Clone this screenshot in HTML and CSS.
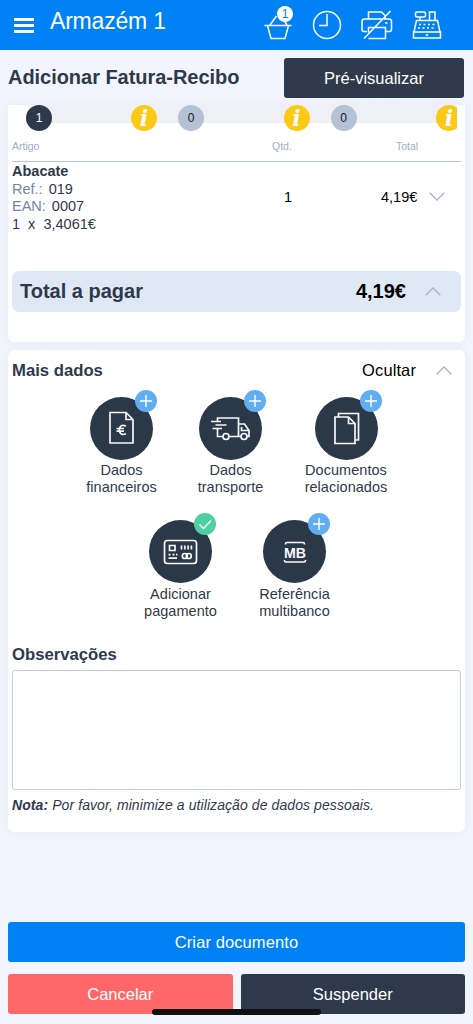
FILE: index.html
```html
<!DOCTYPE html>
<html lang="pt">
<head>
<meta charset="utf-8">
<meta name="viewport" content="width=device-width, initial-scale=1">
<title>Adicionar Fatura-Recibo</title>
<link rel="stylesheet" href="styles.css">
</head>
<body>
<div class="app">
  <header class="topbar">
    <button class="menu" aria-label="Menu"><span></span><span></span><span></span></button>
    <div class="store">Armazém 1</div>
    <nav class="tools">
      <span class="tool basket">
        <svg width="30" height="30" viewBox="0 0 30 30"><path d="M1.500 15.500h27M4.500 15.500L8 28.500h14l3.500-13M7 15L13.500 6M21 10l3 5"/></svg>
        <span class="count">1</span>
      </span>
      <span class="tool clock"><svg width="30" height="30" viewBox="0 0 30 30"><circle cx="15" cy="15" r="13.500"/><path d="M15 4v11.500H7"/></svg></span>
      <span class="tool printer"><svg width="32" height="30" viewBox="0 0 32 30"><path d="M7.500 9V2h13l3.500 3.500V9M6 21.500H3q-2 0-2-2V11.500Q1 9 3.500 9h24.500q2.500 0 2.500 2.500V19.500q0 2-2 2h-4M7.500 22.500V17.500h17V28.500h-17M24 13h2.500M3 28.500L29.500 1"/></svg></span>
      <span class="tool register"><svg width="30" height="30" viewBox="0 0 30 30"><rect x="3.500" y="2" width="10" height="5" rx="1.500"/><path d="M8 7v3.500M17.500 10.500V2h5.500v8.500M4.500 10.500h21l2.500 11.500h-26zM1.500 22h27v6h-27zM13.700 25h2.500M7 14.500h2M11.500 14.500h2M16 14.500h2M20.500 14.500h2M6 18h2M10.500 18h2M15 18h2M19.500 18h2"/></svg></span>
    </nav>
  </header>

  <div class="titlebar">
    <h1>Adicionar Fatura-Recibo</h1>
    <button class="btn preview">Pré-visualizar</button>
  </div>

  <main>
    <section class="card items">
      <div class="steps">
        <span class="dot active">1</span>
        <span class="dot info">i</span>
        <span class="dot">0</span>
        <span class="dot info">i</span>
        <span class="dot">0</span>
        <span class="dot info">i</span>
      </div>
      <div class="thead"><span>Artigo</span><span class="qty">Qtd.</span><span class="sum">Total</span></div>
      <div class="line">
        <div class="desc">
          <strong class="name">Abacate</strong>
          <div class="ref"><span>Ref.:</span> 019</div>
          <div class="ean"><span>EAN:</span> 0007</div>
          <div class="price">1 &nbsp;x &nbsp;3,4061€</div>
        </div>
        <div class="qty">1</div>
        <div class="sum">4,19€</div>
        <svg class="chev" width="16" height="9" viewBox="0 0 16 9"><path d="M.7.700L8 8l7.300-7.300"/></svg>
      </div>
      <div class="total">
        <span class="label">Total a pagar</span><span class="amount">4,19€</span>
        <svg class="chev" width="16" height="9" viewBox="0 0 16 9"><path d="M.7 8.300L8 1l7.300 7.300"/></svg>
      </div>
    </section>

    <section class="card more">
      <div class="morehead">
        <h2>Mais dados</h2><span class="hide">Ocultar</span>
        <svg class="chev" width="16" height="9" viewBox="0 0 16 9"><path d="M.7 8.300L8 1l7.300 7.300"/></svg>
      </div>
      <div class="row first">
        <a class="action fin"><span class="disc">
          <svg width="63" height="63" viewBox="0 0 63 63"><path d="M20 15.500h16l7 7v23.500H20zM36 15.500v7h7"/><path d="M36 29q-6-2.500-6.800 3.800q.8 6.400 6.800 4M26.500 31.500h7.500M26.500 34.200h7.500"/></svg>
          <i class="badge"><svg width="22" height="22" viewBox="0 0 22 22"><path d="M11 5v12M5 11h12"/></svg></i></span>
          <span class="cap">Dados<br>financeiros</span></a>
        <a class="action tra"><span class="disc">
          <svg width="63" height="63" viewBox="0 0 63 63"><path d="M18.500 24v-3H39.500V39.500H30.500M18.500 32v7.500h5M39.500 27h6l4.500 6.500v6h-2M39.500 39.500h2.500M42.500 30V33.500H49.500M12 24.500h10M16.500 28h11M13.500 31.500H23"/><circle cx="27" cy="39.500" r="3"/><circle cx="45" cy="39.500" r="3"/></svg>
          <i class="badge"><svg width="22" height="22" viewBox="0 0 22 22"><path d="M11 5v12M5 11h12"/></svg></i></span>
          <span class="cap">Dados<br>transporte</span></a>
        <a class="action doc"><span class="disc">
          <svg width="63" height="63" viewBox="0 0 63 63"><path d="M20 20h13.500l6.500 6.500v20H20zM33.500 20v6.500h6.500M23.500 20v-3.500H43.500v26.500H40"/></svg>
          <i class="badge"><svg width="22" height="22" viewBox="0 0 22 22"><path d="M11 5v12M5 11h12"/></svg></i></span>
          <span class="cap">Documentos<br>relacionados</span></a>
      </div>
      <div class="row second">
        <a class="action pay"><span class="disc">
          <svg width="63" height="63" viewBox="0 0 63 63"><rect x="15.500" y="20.500" width="32" height="23" rx="3"/><path d="M20.500 25.500h5.500v5h-5.500zM32.500 25.500v4M35.800 25.500v4M39.100 25.500v4M42.400 25.500v4M19.500 34.700h2M23.500 34.700h2M27 34.700h1.500M19.500 38.200h8.500"/><circle cx="35.800" cy="36" r="2.500"/><circle cx="39.800" cy="36" r="2.500"/></svg>
          <i class="badge done"><svg width="22" height="22" viewBox="0 0 22 22"><path d="M5.500 11.500l4 4L17 7.500"/></svg></i></span>
          <span class="cap">Adicionar<br>pagamento</span></a>
        <a class="action mb"><span class="disc">
          <svg width="63" height="63" viewBox="0 0 63 63"><path d="M22.500 24.500v-.5q0-1.500 1.500-1.500h16q1.500 0 1.500 1.500v.5M21.500 40v.5q0 1.500 1.500 1.500h18q1.500 0 1.500-1.500v-.5"/><text x="21" y="37.700" class="mbtext" textLength="22" lengthAdjust="spacingAndGlyphs">MB</text></svg>
          <i class="badge"><svg width="22" height="22" viewBox="0 0 22 22"><path d="M11 5v12M5 11h12"/></svg></i></span>
          <span class="cap">Referência<br>multibanco</span></a>
      </div>
      <h2 class="obs">Observações</h2>
      <textarea aria-label="Observações"></textarea>
      <p class="note"><b>Nota:</b> Por favor, minimize a utilização de dados pessoais.</p>
    </section>
  </main>

  <footer>
    <button class="btn create">Criar documento</button>
    <div class="pair">
      <button class="btn cancel">Cancelar</button>
      <button class="btn suspend">Suspender</button>
    </div>
  </footer>
  <div class="home"></div>
</div>
</body>
</html>
```
FILE: styles.css
```css
* { box-sizing: border-box; }
body {
  margin: 0;
  background: #f2f5fd;
  color: #2f394c;
  font-family: "Liberation Sans", Arial, sans-serif;
}
.app { position: relative; width: 473px; height: 1024px; overflow: hidden; display: flex; flex-direction: column; }
button { border: 0; padding: 0; font: inherit; }
h1, h2, p { margin: 0; }
svg { display: block; fill: none; }

.topbar { flex: none; height: 50px; padding-left: 14px; background: #0082f4; color: #fff; display: flex; }
.menu { width: 20px; height: 15px; margin-top: 18px; background: none; display: flex; flex-direction: column; justify-content: space-between; }
.menu span { width: 20px; height: 3px; background: #fff; }
.store { margin-left: 16px; width: 214px; font-size: 23px; line-height: 42px; letter-spacing: -.2px; }
.tools { display: flex; }
.tools svg { stroke: #fff; stroke-width: 1.5; }
.tool { position: relative; margin-top: 10px; }
.basket { width: 49px; margin-left: -1px; }
.clock { width: 49px; }
.printer { width: 51px; }
.count { position: absolute; left: 14px; top: -4px; width: 16px; height: 16px; border-radius: 50%; background: #fff; color: #0082f4; font-size: 12px; line-height: 16px; text-align: center; }

.titlebar { flex: none; height: 55px; padding: 8px 9px 0 8px; display: flex; justify-content: space-between; align-items: flex-start; }
h1 { font-size: 20px; line-height: 38px; letter-spacing: -.04px; }
.btn { height: 40px; border-radius: 3px; color: #fff; font-size: 16.500px; text-align: center; }
.preview { width: 180px; background: #2f394c; }

main { flex: none; padding: 0 8px; display: flex; flex-direction: column; gap: 8px; }
.card { background: #fff; width: 457px; padding: 0 4px; box-shadow: 0 0 10px rgba(50, 50, 70, .055); }
.items { height: 237px; border-radius: 0 0 6px 6px; }
.steps { height: 27px; margin: 0 4px 0 14px; overflow: hidden; display: flex; background: linear-gradient(#eef0f6, #eef0f6) 13px 0 / 100% 18px no-repeat; }
.dot { flex: none; width: 26px; height: 26px; border-radius: 50%; background: #b5c2d6; color: #14181f; font-size: 12px; line-height: 27px; text-align: center; margin-right: 79.500px; }
.dot.active { background: #2f394c; color: #fff; margin-right: 79px; }
.dot.info { background: #fcc916; color: #fff; margin-right: 21px; font: italic bold 22px/26px "DejaVu Serif", serif; }
.thead { height: 30px; border-bottom: 1px solid #b5c5db; display: grid; grid-template-columns: 260px 124px 1fr; color: #a0adc6; font-size: 10.500px; line-height: 28px; }
.line { height: 108px; padding-top: 1px; display: grid; grid-template-columns: 272px 97px 48px 1fr; font-size: 15px; color: #000; }
.desc { color: #2f394c; font-size: 14.500px; line-height: 17.700px; }
.name { display: block; }
.desc span { color: #7584a7; margin-right: 2px; }
.line .qty, .line .sum { line-height: 68px; font-size: 14.500px; }
.chev { stroke: #a4b4d0; stroke-width: 1.3; }
.line .chev { margin-top: 29px; }
.total { height: 41px; width: 449px; margin-top: 1px; padding: 0 20px 0 8px; border-radius: 7px; background: #dfe9f5; display: flex; align-items: center; font-size: 20px; font-weight: bold; }
.total .label { flex: 1; }
.total .amount { color: #000; margin-right: 19px; }

.more { height: 482px; border-radius: 6px; }
.morehead { height: 39px; display: flex; align-items: center; padding: 2px 9px 0 0; }
h2 { font-size: 16.700px; line-height: 20px; flex: 1; }
.hide { color: #000; font-size: 16.500px; letter-spacing: .1px; margin-right: 20px; }
.row { display: flex; justify-content: flex-start; }
.first { height: 124px; padding: 8px 0 0 64px; }
.second { height: 122px; padding: 7px 0 0 122px; }
.action { flex: none; display: flex; flex-direction: column; align-items: center; }
.fin { width: 91px; }
.tra { width: 127px; }
.doc { width: 104px; }
.pay { width: 93px; }
.mb { width: 135px; }
.disc { position: relative; width: 63px; height: 63px; border-radius: 50%; background: #2b3848; }
.disc > svg { stroke: #f7f8fa; stroke-width: 1.7; }
.disc text { fill: #f7f8fa; stroke: none; }
.mbtext { font-size: 15px; font-weight: bold; }
.badge { position: absolute; left: 45px; top: -7px; width: 22px; height: 22px; border-radius: 50%; background: #61adf2; }
.badge.done { background: #4ed0a4; }
.badge svg { stroke: #fff; stroke-width: 1.4; }
.cap { margin-top: 2px; font-size: 14.500px; line-height: 16.500px; letter-spacing: .04px; text-align: center; white-space: nowrap; }
.second .cap { margin-top: 3px; }
.obs { margin-top: 10px; }
textarea { display: block; width: 449px; height: 120px; margin-top: 5px; border: 1px solid #c5cedf; border-radius: 3px; resize: none; background: #fff; }
.note { margin-top: 6px; font-size: 14px; line-height: 18px; letter-spacing: .085px; font-style: italic; }

footer { margin-top: 90px; padding: 0 8px; }
.create { width: 457px; background: #0082f4; display: block; letter-spacing: .1px; }
.pair { margin-top: 12px; display: flex; gap: 8px; }
.cancel { width: 225px; background: #ff6769; }
.suspend { width: 225px; background: #2f394c; }
.home { position: absolute; left: 152px; top: 1009px; width: 169px; height: 6px; border-radius: 3px; background: #111; }
```
